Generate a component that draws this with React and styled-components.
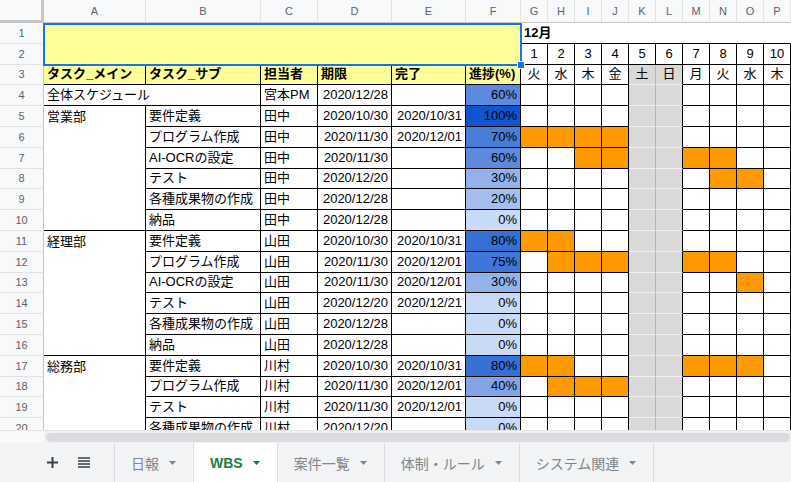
import React from "react";
import styled, { createGlobalStyle } from "styled-components";

const GlobalStyle = createGlobalStyle`
  html, body {
    margin: 0;
    padding: 0;
    background: #fff;
  }
  body {
    font-family: "Liberation Sans", "Noto Sans CJK JP", sans-serif;
    overflow: hidden;
  }
`;

const Page = styled.div`
  width: 791px;
  height: 482px;
  display: flex;
  flex-direction: column;
  overflow: hidden;
`;

const Viewport = styled.div`
  height: 430px;
  flex: none;
  overflow: hidden;
`;

const Grid = styled.div`
  position: relative;
  display: grid;
  grid-template-columns: 44px 102px 115px 57px 74px 74px 55px repeat(10, 27px);
  grid-template-rows: 23px repeat(20, 20.8px);
`;

const Corner = styled.div`
  box-sizing: border-box;
  background: #f8f9fa;
  border-right: 3px solid #c4c7c5;
  border-bottom: 3px solid #c4c7c5;
`;

const ColHead = styled.div`
  box-sizing: border-box;
  display: flex;
  align-items: center;
  justify-content: center;
  background: #f8f9fa;
  border-right: 1px solid #e2e3e3;
  border-bottom: 1px solid #c4c7c5;
  color: #5f6368;
  font-size: 11px;
`;

const RowHead = styled.div`
  box-sizing: border-box;
  display: flex;
  align-items: center;
  justify-content: center;
  background: #f8f9fa;
  border-right: 1px solid #c4c7c5;
  border-bottom: 1px solid #e2e3e3;
  color: #5f6368;
  font-size: 11px;
`;

const Cell = styled.div`
  box-sizing: border-box;
  grid-column: span ${(p) => p.$span || 1};
  grid-row: span ${(p) => p.$rows || 1};
  display: flex;
  align-items: ${(p) => (p.$top ? "flex-start" : "center")};
  justify-content: ${(p) =>
    p.$align === "right" ? "flex-end" : p.$align === "center" ? "center" : "flex-start"};
  padding: ${(p) => (p.$top ? "3px 3px 0" : "0 3px")};
  background: ${(p) => p.$bg || "#fff"};
  border-right: 1px solid ${(p) => p.$lineR || "#000"};
  border-bottom: 1px solid ${(p) => p.$lineB || "#000"};
  color: #000;
  font-size: 13px;
  font-weight: ${(p) => (p.$bold ? 700 : 400)};
  line-height: 16px;
  white-space: nowrap;
  overflow: hidden;
`;

const DayCell = styled.div`
  box-sizing: border-box;
  display: flex;
  align-items: center;
  justify-content: center;
  background: ${(p) => (p.$on ? "#ff9900" : p.$weekend ? "#d9d9d9" : "#fff")};
  border-right: 1px solid ${(p) => (p.$weekend && p.$first ? "#b5b5b5" : "#000")};
  border-bottom: 1px solid ${(p) => (p.$weekend ? "#f1f1f1" : "#000")};
  color: #000;
  font-size: 13px;
  line-height: 16px;
`;

const Selection = styled.div`
  position: absolute;
  left: 43px;
  top: 23px;
  width: 479px;
  height: 43px;
  box-sizing: border-box;
  border: 2px solid #1a73e8;
  pointer-events: none;

  &::after {
    content: "";
    position: absolute;
    right: -5px;
    bottom: -5px;
    width: 6px;
    height: 6px;
    background: #1a73e8;
    border: 1px solid #fff;
  }
`;

const ScrollBand = styled.div`
  height: 13px;
  flex: none;
  display: flex;
  background: #f1f1f1;
  border-top: 1px solid #e6e6e6;
  box-sizing: border-box;
`;

const ScrollCorner = styled.div`
  width: 44px;
  background: #f8f9fa;
`;

const Thumb = styled.div`
  flex: 1;
  margin: 2px 1px 1px 2px;
  background: #dadce0;
  border-radius: 5px;
`;

const TabBar = styled.div`
  flex: 1;
  display: flex;
  align-items: stretch;
  background: #f1f3f4;
`;

const Tools = styled.div`
  width: 115px;
  box-sizing: border-box;
  display: flex;
  align-items: center;
  gap: 20px;
  padding-left: 47px;
  border-right: 1px solid #dadce0;
`;

const Tab = styled.div`
  display: flex;
  align-items: center;
  gap: 10px;
  padding: 0 17px 0 16px;
  border-right: 1px solid #dadce0;
  background: ${(p) => (p.$active ? "#fff" : "transparent")};
  color: ${(p) => (p.$active ? "#188038" : "#80868b")};
  font-size: 14px;
  font-weight: ${(p) => (p.$active ? 700 : 400)};
`;

const days = ["火", "水", "木", "金", "土", "日", "月", "火", "水", "木"];
const letters = "ABCDEFGHIJKLMNOP".split("");

const rows = [
  { n: 4, whole: "全体スケジュール", who: "宮本PM", due: "2020/12/28", done: "", pct: 60 },
  { n: 5, group: "営業部", span: 6, sub: "要件定義", who: "田中", due: "2020/10/30", done: "2020/10/31", pct: 100 },
  { n: 6, sub: "プログラム作成", who: "田中", due: "2020/11/30", done: "2020/12/01", pct: 70 },
  { n: 7, sub: "AI-OCRの設定", who: "田中", due: "2020/11/30", done: "", pct: 60 },
  { n: 8, sub: "テスト", who: "田中", due: "2020/12/20", done: "", pct: 30 },
  { n: 9, sub: "各種成果物の作成", who: "田中", due: "2020/12/28", done: "", pct: 20 },
  { n: 10, sub: "納品", who: "田中", due: "2020/12/28", done: "", pct: 0 },
  { n: 11, group: "経理部", span: 6, sub: "要件定義", who: "山田", due: "2020/10/30", done: "2020/10/31", pct: 80 },
  { n: 12, sub: "プログラム作成", who: "山田", due: "2020/11/30", done: "2020/12/01", pct: 75 },
  { n: 13, sub: "AI-OCRの設定", who: "山田", due: "2020/11/30", done: "2020/12/01", pct: 30 },
  { n: 14, sub: "テスト", who: "山田", due: "2020/12/20", done: "2020/12/21", pct: 0 },
  { n: 15, sub: "各種成果物の作成", who: "山田", due: "2020/12/28", done: "", pct: 0 },
  { n: 16, sub: "納品", who: "山田", due: "2020/12/28", done: "", pct: 0 },
  { n: 17, group: "総務部", span: 4, sub: "要件定義", who: "川村", due: "2020/10/30", done: "2020/10/31", pct: 80 },
  { n: 18, sub: "プログラム作成", who: "川村", due: "2020/11/30", done: "2020/12/01", pct: 40 },
  { n: 19, sub: "テスト", who: "川村", due: "2020/11/30", done: "2020/12/01", pct: 0 },
  { n: 20, sub: "各種成果物の作成", who: "川村", due: "2020/12/20", done: "", pct: 0 },
];

// gantt bars: row number -> day indexes (G = 0)
const bars = {
  6: [0, 1, 2, 3],
  7: [2, 3, 6, 7],
  8: [7, 8],
  11: [0, 1],
  12: [1, 2, 3, 6, 7],
  13: [8],
  17: [0, 1, 6, 7, 8],
  18: [1, 2, 3],
};

// conditional-format gradient: 0% light blue -> 100% dark blue
function progressColor(pct) {
  const from = [201, 218, 248];
  const to = [17, 85, 204];
  const t = pct / 100;
  const c = from.map((v, i) => Math.round(v + (to[i] - v) * t));
  return `rgb(${c.join(",")})`;
}

function Caret({ color }) {
  return (
    <svg width="7" height="4" viewBox="0 0 7 4">
      <path d="M0 0h7L3.5 4z" fill={color} />
    </svg>
  );
}

function PlusIcon() {
  return (
    <svg width="11" height="11" viewBox="0 0 11 11">
      <path d="M5.5 0v11M0 5.5h11" stroke="#3c4043" strokeWidth="2" />
    </svg>
  );
}

function ListIcon() {
  return (
    <svg width="12" height="11" viewBox="0 0 12 11">
      <path d="M0 1h12M0 4h12M0 7h12M0 10h12" stroke="#3c4043" strokeWidth="1.6" />
    </svg>
  );
}

const tabs = ["日報", "WBS", "案件一覧", "体制・ルール", "システム関連"];

function App() {
  return (
    <Page>
      <GlobalStyle />
      <Viewport>
        <Grid>
          <Corner />
          {letters.map((l) => (
            <ColHead key={l}>{l}</ColHead>
          ))}

          <RowHead>1</RowHead>
          <Cell $span={6} $rows={2} $bg="#ffff99" />
          <Cell $span={10} $bold $lineR="transparent">
            12月
          </Cell>

          <RowHead>2</RowHead>
          {days.map((_, i) => (
            <DayCell key={i}>{i + 1}</DayCell>
          ))}

          <RowHead>3</RowHead>
          <Cell $bg="#ffff99" $bold>タスク_メイン</Cell>
          <Cell $bg="#ffff99" $bold>タスク_サブ</Cell>
          <Cell $bg="#ffff99" $bold>担当者</Cell>
          <Cell $bg="#ffff99" $bold>期限</Cell>
          <Cell $bg="#ffff99" $bold>完了</Cell>
          <Cell $bg="#ffff99" $bold>進捗(%)</Cell>
          {days.map((d, i) => (
            <DayCell key={i} $weekend={i === 4 || i === 5} $first={i === 4}>
              {d}
            </DayCell>
          ))}

          {rows.map((r) => (
            <React.Fragment key={r.n}>
              <RowHead>{r.n}</RowHead>
              {r.whole && <Cell $span={2}>{r.whole}</Cell>}
              {r.group && (
                <Cell $rows={r.span} $top>
                  {r.group}
                </Cell>
              )}
              {!r.whole && <Cell>{r.sub}</Cell>}
              <Cell>{r.who}</Cell>
              <Cell $align="right">{r.due}</Cell>
              <Cell $align="right">{r.done}</Cell>
              <Cell $align="right" $bg={progressColor(r.pct)}>
                {r.pct}%
              </Cell>
              {days.map((_, i) => (
                <DayCell
                  key={i}
                  $weekend={i === 4 || i === 5}
                  $first={i === 4}
                  $on={(bars[r.n] || []).includes(i)}
                />
              ))}
            </React.Fragment>
          ))}

          <Selection />
        </Grid>
      </Viewport>

      <ScrollBand>
        <ScrollCorner />
        <Thumb />
      </ScrollBand>

      <TabBar>
        <Tools>
          <PlusIcon />
          <ListIcon />
        </Tools>
        {tabs.map((t) => {
          const active = t === "WBS";
          return (
            <Tab key={t} $active={active}>
              {t}
              <Caret color={active ? "#188038" : "#80868b"} />
            </Tab>
          );
        })}
      </TabBar>
    </Page>
  );
}

export default App;
